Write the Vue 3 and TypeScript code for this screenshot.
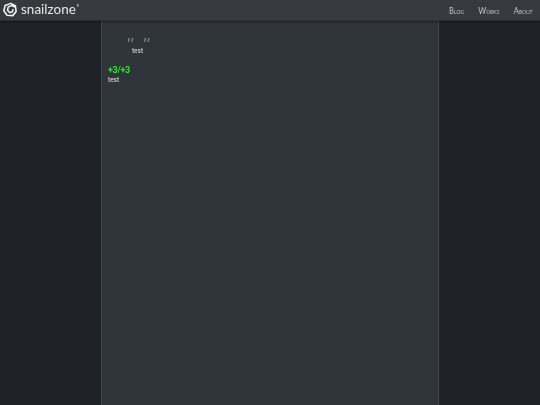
<script setup lang="ts">
const links: string[] = ['Blog', 'Works', 'About']
</script>

<template>
  <div class="page">
    <header class="bar">
      <div class="brand">
        <svg class="logo" viewBox="0 0 16 16" width="14" height="15" fill="none" stroke="#f2f2f2" stroke-width="1.8" stroke-linecap="round" stroke-linejoin="round">
          <path d="M14.4 4 9 1 2.4 3.4 1 9.4l3.6 5.2 6.6.4 3.8-4.6-.6-4.8-4.2-2.2-4.2 1.6-.8 3.8 2.4 2.6 3-.6.8-2.4" />
        </svg>
        <span class="name">snailzone</span><span class="tick">'</span>
      </div>
      <nav class="nav">
        <a v-for="l in links" :key="l" class="link">{{ l }}</a>
      </nav>
    </header>
    <main class="col">
      <div class="quote">
        <div class="marks"><span>"</span><span>"</span></div>
        <div class="qtext">test</div>
      </div>
      <div class="score">+3/+3</div>
      <div class="text">test</div>
    </main>
  </div>
</template>

<style scoped>
.page {
  width: 540px;
  height: 405px;
  background: #1f2226;
  display: flex;
  flex-direction: column;
  overflow: hidden;
  font-family: Roboto, "Liberation Sans", sans-serif;
}
.bar {
  height: 20px;
  flex: none;
  background: #363a3f;
  border-bottom: 1px solid #2c2f33;
  box-shadow: 0 1px 2px rgba(0, 0, 0, 0.35);
  display: flex;
  align-items: center;
  justify-content: space-between;
  padding: 0 7px 0 3px;
  position: relative;
  z-index: 1;
}
.brand {
  display: flex;
  align-items: center;
  color: #e6e6e6;
  will-change: transform;
}
.logo {
  margin: -1px 4px 0 0;
}
.name {
  font-family: Lato, Roboto, sans-serif;
  font-size: 13.5px;
  line-height: 16px;
  margin-top: -2px;
}
.tick {
  font-family: Lato, Roboto, sans-serif;
  font-size: 11px;
  align-self: flex-start;
  margin-left: 1px;
  line-height: 10px;
}
.nav {
  display: flex;
  gap: 17px;
  transform: scaleX(0.84);
  transform-origin: right center;
  will-change: transform;
}
.link {
  color: #c4c6c8;
  font-size: 9px;
  font-variant: small-caps;
  font-family: Lato, Roboto, sans-serif;
}
.col {
  box-sizing: border-box;
  width: 338px;
  margin-left: 101px;
  flex: 1;
  background: #2f333a;
  border-left: 1px solid #43464b;
  border-right: 1px solid #43464b;
  padding: 15px 0 0 6px;
}
.quote {
  margin-left: 18px;
  width: 23px;
  will-change: transform;
}
.marks {
  display: flex;
  justify-content: space-between;
  color: #7a7d82;
  font-family: "Liberation Sans", sans-serif;
  font-style: italic;
  font-size: 19px;
  line-height: 18px;
  height: 9px;
}
.qtext {
  color: #e4e4e4;
  font-size: 6.5px;
  line-height: 9px;
  text-align: center;
  margin-top: 2px;
}
.score {
  margin-top: 9px;
  color: #22ee22;
  font-size: 9px;
  font-weight: 700;
  line-height: 11px;
  letter-spacing: -0.3px;
  will-change: transform;
}
.text {
  color: #e4e4e4;
  font-size: 6.5px;
  line-height: 8px;
  will-change: transform;
}
</style>
